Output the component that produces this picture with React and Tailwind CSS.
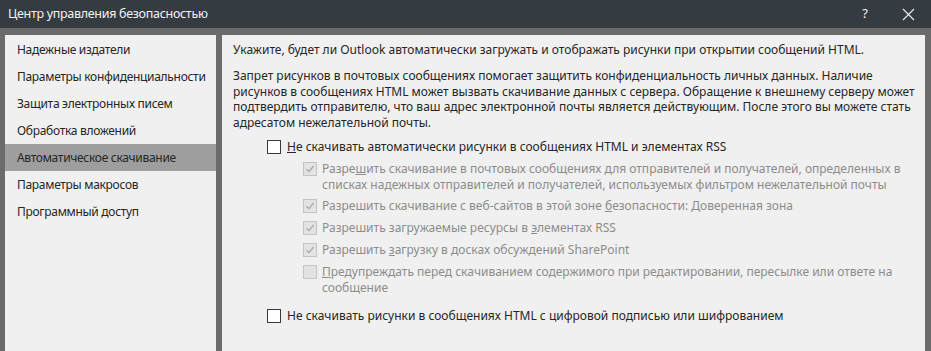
import React from 'react';

const navItems = [
  'Надежные издатели',
  'Параметры конфиденциальности',
  'Защита электронных писем',
  'Обработка вложений',
  'Автоматическое скачивание',
  'Параметры макросов',
  'Программный доступ',
];

function CheckBox({ checked, disabled }) {
  return (
    <span
      className={`mt-[1px] flex h-[14px] w-[14px] shrink-0 items-center justify-center border ${
        disabled ? 'border-[#c4c4c4] bg-[#e3e3e3]' : 'border-[#3a3a3a] bg-white'
      }`}
    >
      {checked && (
        <svg width="10" height="10" viewBox="0 0 10 10">
          <path d="M1.5 5.2 L4 7.6 L8.6 2" fill="none" stroke="#a9a9a9" strokeWidth="1.3" />
        </svg>
      )}
    </span>
  );
}

function App() {
  const selected = 4;

  return (
    <div
      className="flex h-[351px] w-[931px] flex-col overflow-hidden bg-[#6b6b6b]"
      style={{ fontFamily: '"Noto Sans", "Open Sans", sans-serif' }}
    >
      <div className="flex h-[28px] shrink-0 items-center bg-[#343b41] pl-[8px] pr-[16px] text-[#f2f2f2]">
        <span className="text-[12.5px] tracking-[-0.3px]">Центр управления безопасностью</span>
        <span className="ml-auto mr-[34px] text-[13px]">?</span>
        <svg width="13" height="13" viewBox="0 0 13 13">
          <path d="M1 1 L12 12 M12 1 L1 12" stroke="#e8e8e8" strokeWidth="1.2" />
        </svg>
      </div>

      <div className="flex flex-1 gap-[6px] pl-[5px] pr-[6px] pt-[7px]">
        <div className="w-[211px] shrink-0 bg-[#f0f0f0] pt-[1px]">
          {navItems.map((item, i) => (
            <div
              key={item}
              className={`flex h-[27px] items-center whitespace-nowrap pl-[12px] text-[12px] tracking-[-0.3px] text-[#262626] ${
                i === selected ? 'bg-[#9e9e9e]' : ''
              }`}
            >
              {item}
            </div>
          ))}
        </div>

        <div className="flex-1 bg-[#f0f0f0] pl-[11px] pt-[7px] text-[12px] leading-[16px] text-[#262626]">
          <div className="whitespace-nowrap">
            Укажите, будет ли Outlook автоматически загружать и отображать рисунки при открытии сообщений HTML.
          </div>
          <div className="mt-[10px] whitespace-nowrap leading-[15.5px]">
            Запрет рисунков в почтовых сообщениях помогает защитить конфиденциальность личных данных. Наличие
            <br />
            рисунков в сообщениях HTML может вызвать скачивание данных с сервера. Обращение к внешнему серверу может
            <br />
            подтвердить отправителю, что ваш адрес электронной почты является действующим. После этого вы можете стать
            <br />
            адресатом нежелательной почты.
          </div>

          <div className="ml-[34px] mt-[9px] flex gap-[6px] whitespace-nowrap">
            <CheckBox />
            <span>
              <u>Н</u>е скачивать автоматически рисунки в сообщениях HTML и элементах RSS
            </span>
          </div>

          <div className="ml-[70px] whitespace-nowrap text-[#8c8c8c]">
            <div className="mt-[6px] flex gap-[5px]">
              <CheckBox checked disabled />
              <span>
                Разре<u>ш</u>ить скачивание в почтовых сообщениях для отправителей и получателей, определенных в
                <br />
                списках надежных отправителей и получателей, используемых фильтром нежелательной почты
              </span>
            </div>
            <div className="mt-[5px] flex gap-[5px]">
              <CheckBox checked disabled />
              <span>
                Разрешить скачивание с веб-сайтов в этой зоне <u>б</u>езопасности: Доверенная зона
              </span>
            </div>
            <div className="mt-[6px] flex gap-[5px]">
              <CheckBox checked disabled />
              <span>
                Разрешить загружаемые ресурсы в <u>э</u>лементах RSS
              </span>
            </div>
            <div className="mt-[6px] flex gap-[5px]">
              <CheckBox checked disabled />
              <span>
                Разрешить <u>з</u>агрузку в досках обсуждений SharePoint
              </span>
            </div>
            <div className="mt-[6px] flex gap-[5px]">
              <CheckBox disabled />
              <span>
                <u>П</u>редупреждать перед скачиванием содержимого при редактировании, пересылке или ответе на
                <br />
                сообщение
              </span>
            </div>
          </div>

          <div className="ml-[34px] mt-[12px] flex gap-[6px] whitespace-nowrap">
            <CheckBox />
            <span>Не скачивать рисунки в сообщениях HTML с цифровой подписью или шифрованием</span>
          </div>
        </div>
      </div>
    </div>
  );
}

export default App;
